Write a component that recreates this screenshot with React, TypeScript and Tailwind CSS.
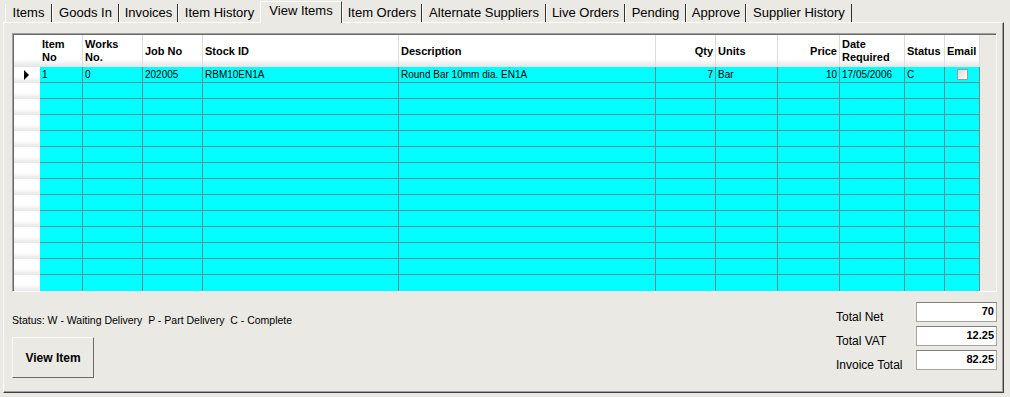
import React from "react";

type Col = {
  label: string[];
  w: string;
  right?: boolean;
  value?: string;
  check?: boolean;
};

const cols: Col[] = [
  { label: ["Item", "No"], w: "w-[43px]", value: "1" },
  { label: ["Works", "No."], w: "w-[60px]", value: "0" },
  { label: ["Job No"], w: "w-[60px]", value: "202005" },
  { label: ["Stock ID"], w: "w-[196px]", value: "RBM10EN1A" },
  { label: ["Description"], w: "w-[257px]", value: "Round Bar 10mm dia. EN1A" },
  { label: ["Qty"], w: "w-[60px]", right: true, value: "7" },
  { label: ["Units"], w: "w-[62px]", value: "Bar" },
  { label: ["Price"], w: "w-[62px]", right: true, value: "10" },
  { label: ["Date", "Required"], w: "w-[65px]", value: "17/05/2006" },
  { label: ["Status"], w: "w-[40px]", value: "C" },
  { label: ["Email"], w: "w-[35px]", check: true },
];

const tabs = [
  { label: "Items", w: "w-[47px]" },
  { label: "Goods In", w: "w-[67px]" },
  { label: "Invoices", w: "w-[59px]" },
  { label: "Item History", w: "w-[82px]", beforeActive: true },
  { label: "View Items", w: "w-[82px]", active: true },
  { label: "Item Orders", w: "w-[80px]" },
  { label: "Alternate Suppliers", w: "w-[124px]" },
  { label: "Live Orders", w: "w-[79px]" },
  { label: "Pending", w: "w-[61px]" },
  { label: "Approve", w: "w-[60px]" },
  { label: "Supplier History", w: "w-[106px]" },
];

const totals = [
  { label: "Total Net", value: "70" },
  { label: "Total VAT", value: "12.25" },
  { label: "Invoice Total", value: "82.25" },
];

function TabStrip() {
  return (
    <div className="relative z-10 flex h-[22px] items-end pl-[5px]">
      {tabs.map((t) =>
        t.active ? (
          <div
            key={t.label}
            className={`${t.w} -mb-px flex h-[22px] items-center justify-center border-l border-t border-r border-white border-r-[#404040] bg-[#ebe9e4] pb-[3px] text-[13px]`}
          >
            {t.label}
          </div>
        ) : (
          <div
            key={t.label}
            className={`${t.w} flex h-[18px] items-center justify-center border-l border-white pb-px text-[13px] ${
              t.beforeActive ? "" : "border-r border-r-[#303030]"
            }`}
          >
            {t.label}
          </div>
        )
      )}
    </div>
  );
}

function Grid() {
  const emptyRows = Array.from({ length: 13 });
  return (
    <div className="h-[259px] w-[985px] border border-t-[#a0a0a0] border-l-[#a0a0a0] border-r-white border-b-white">
      <div className="h-full overflow-hidden border-l border-t border-[#696969]">
        {/* header */}
        <div className="flex h-[32px]">
          <div className="h-full w-[26px] bg-linear-to-b from-white from-75% to-[#e4e4e4]" />
          {cols.map((c, i) => (
            <div
              key={i}
              className={`${c.w} flex h-full flex-col justify-center border-r border-[#dcdcdc] bg-linear-to-b from-white from-75% to-[#e4e4e4] px-[2px] text-[11px] font-bold leading-[13px] ${
                c.right ? "items-end" : "items-start"
              }`}
            >
              {c.label.map((l) => (
                <span key={l}>{l}</span>
              ))}
            </div>
          ))}
        </div>
        {/* first data row */}
        <div className="flex h-[16px]">
          <div className="flex h-full w-[26px] items-center bg-linear-to-b from-white from-60% to-[#e6e6e6] pl-[10px]">
            <svg width="5" height="10" viewBox="0 0 5 10">
              <polygon points="0,0 5,5 0,10" fill="#000" />
            </svg>
          </div>
          {cols.map((c, i) => (
            <div
              key={i}
              className={`${c.w} flex h-full items-center border-r border-b border-[#5f8f8f] bg-[#00ffff] px-[2px] text-[10px] leading-[15px] ${
                c.right ? "justify-end" : c.check ? "justify-center" : "justify-start"
              }`}
            >
              {c.check ? (
                <span className="mb-px block h-[11px] w-[11px] border border-[#9a9a9a] bg-linear-to-br from-[#d8d8d8] to-white" />
              ) : (
                c.value
              )}
            </div>
          ))}
        </div>
        {emptyRows.map((_, r) => (
          <div key={r} className="flex h-[16px]">
            <div className="h-full w-[26px] bg-linear-to-b from-white from-60% to-[#e6e6e6]" />
            {cols.map((c, i) => (
              <div
                key={i}
                className={`${c.w} h-full border-r border-[#5f8f8f] bg-[#00ffff] ${
                  r === emptyRows.length - 1 ? "" : "border-b"
                }`}
              />
            ))}
          </div>
        ))}
      </div>
    </div>
  );
}

export default function App() {
  return (
    <div className="h-[397px] w-[1010px] overflow-hidden bg-[#ebe9e4] font-['Liberation_Sans',Arial,sans-serif] text-black">
      <TabStrip />
      <div className="ml-[3px] h-[371px] w-[1001px] border border-t-white border-l-white border-r-[#404040] border-b-[#404040]">
        <div className="h-full border-r border-b border-[#a0a0a0] pl-[8px] pt-[10px]">
          <Grid />
          <div className="flex w-[985px]">
            <div className="flex flex-col items-start">
              <div className="mt-[21px] text-[10.5px] leading-[14px]">
                Status: W - Waiting Delivery&nbsp; P - Part Delivery&nbsp; C - Complete
              </div>
              <button className="mt-[10px] h-[41px] w-[82px] border border-t-white border-l-white border-r-[#6a6a6a] border-b-[#6a6a6a] bg-[#ebe9e4] text-[12px] font-bold">
                View Item
              </button>
            </div>
            <div className="ml-auto mt-[10px] flex flex-col gap-[4px]">
              {totals.map((t) => (
                <div key={t.label} className="flex h-[20px] items-start">
                  <div className="mt-[8px] w-[80px] text-[12px] leading-[14px]">{t.label}</div>
                  <div className="h-[20px] w-[81px] border border-[#a5a5a5] border-t-[#7f7f7f] bg-white pr-[2px] pt-[2px] text-right text-[11px] font-bold leading-[13px]">
                    {t.value}
                  </div>
                </div>
              ))}
            </div>
          </div>
        </div>
      </div>
    </div>
  );
}
